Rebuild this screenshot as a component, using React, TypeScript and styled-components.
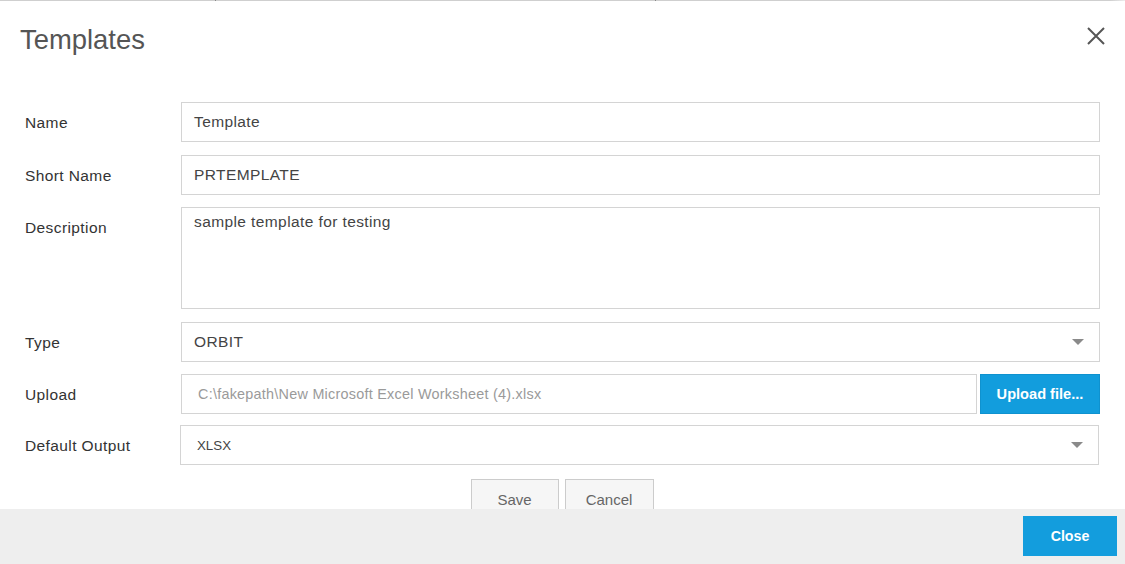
import React from "react";
import styled, { createGlobalStyle } from "styled-components";

const Global = createGlobalStyle`
  html, body { margin: 0; padding: 0; background: #fff; }
  body { font-family: "Liberation Sans", Arial, sans-serif; }
  * { box-sizing: border-box; }
`;

const Modal = styled.div`
  width: 1125px;
  height: 564px;
  display: flex;
  flex-direction: column;
  background: #fff;
  overflow: hidden;
`;

const TopRule = styled.div`
  height: 1px;
  flex: none;
  background:
    linear-gradient(#888, #888) 215px 0 / 1px 1px no-repeat,
    linear-gradient(#888, #888) 655px 0 / 1px 1px no-repeat,
    linear-gradient(to right, #cfcfcf 0, #cfcfcf 1110px, #ececec 1125px);
`;

const Header = styled.div`
  flex: none;
  display: flex;
  justify-content: space-between;
  align-items: flex-start;
  padding: 23px 20px 0 20px;
  height: 55px;
`;

const Title = styled.h1`
  margin: 0;
  font-size: 27.4px;
  line-height: 32px;
  font-weight: 400;
  color: #555;
`;

const CloseX = styled.button`
  border: none;
  background: none;
  padding: 0;
  margin-top: 3px;
  width: 18px;
  height: 18px;
  cursor: pointer;
  display: flex;
`;

const Body = styled.div`
  flex: 1;
  overflow: hidden;
  padding: 46px 25px 0 25px;
`;

const Row = styled.div<{ $mb: number; $top?: boolean }>`
  display: flex;
  align-items: ${(p) => (p.$top ? "flex-start" : "center")};
  margin-bottom: ${(p) => p.$mb}px;
`;

const Label = styled.label<{ $pt?: number }>`
  width: 156px;
  flex: none;
  font-size: 15.5px;
  letter-spacing: 0.4px;
  line-height: 18px;
  color: #333;
  padding-top: ${(p) => p.$pt ?? 0}px;
  margin-top: ${(p) => (p.$pt ? 0 : 2)}px;
`;

const Field = styled.div<{ $h?: number; $shift?: boolean }>`
  flex: 1;
  height: ${(p) => p.$h ?? 40}px;
  border: 1px solid #d4d4d4;
  background: #fff;
  padding: ${(p) => (p.$h ? "5px 12px" : "0 12px")};
  display: flex;
  align-items: ${(p) => (p.$h ? "flex-start" : "center")};
  position: relative;
  font-size: 15.5px;
  letter-spacing: 0.4px;
  color: #444;
  margin-left: ${(p) => (p.$shift ? "-1px" : "0")};
  margin-right: ${(p) => (p.$shift ? "1px" : "0")};
`;

const SmallText = styled.span<{ $muted?: boolean }>`
  font-family: Arial, "Liberation Sans", sans-serif;
  font-size: ${(p) => (p.$muted ? "14.4px" : "13.3px")};
  letter-spacing: ${(p) => (p.$muted ? "0.25px" : "0")};
  color: ${(p) => (p.$muted ? "#9a9a9a" : "#444")};
  padding-left: ${(p) => (p.$muted ? "4px" : "4px")};
`;

const Caret = styled.span`
  position: absolute;
  right: 15px;
  top: 50%;
  margin-top: -3px;
  width: 0;
  height: 0;
  border-left: 6px solid transparent;
  border-right: 6px solid transparent;
  border-top: 6px solid #8a8a8a;
`;

const UploadBtn = styled.button`
  flex: none;
  width: 120px;
  height: 40px;
  margin-left: 3px;
  border: 1px solid #0f92cf;
  background: #129ddd;
  color: #fff;
  font-family: "Liberation Sans", Arial, sans-serif;
  font-weight: 700;
  font-size: 14.6px;
  cursor: pointer;
`;

const Actions = styled.div`
  display: flex;
  justify-content: center;
  gap: 6px;
  margin-left: -25px;
  margin-right: -25px;
  padding-right: 1px;
`;

const GhostBtn = styled.button<{ $w: number }>`
  width: ${(p) => p.$w}px;
  height: 40px;
  border: 1px solid #cccccc;
  background: #f6f6f6;
  color: #666;
  font-family: "Liberation Sans", Arial, sans-serif;
  font-size: 15px;
  padding: 0;
  cursor: pointer;
`;

const Footer = styled.div`
  flex: none;
  height: 55px;
  background: #eeeeee;
  display: flex;
  justify-content: flex-end;
  align-items: flex-start;
  padding: 7px 8px 0 0;
`;

const PrimaryBtn = styled.button`
  width: 94px;
  height: 40px;
  border: none;
  background: #139ddd;
  color: #fff;
  font-family: "Liberation Sans", Arial, sans-serif;
  font-weight: 700;
  font-size: 14.2px;
  cursor: pointer;
`;

export default function App() {
  return (
    <>
      <Global />
      <Modal>
        <TopRule />
        <Header>
          <Title>Templates</Title>
          <CloseX aria-label="close">
            <svg width="18" height="18" viewBox="0 0 18 18">
              <path d="M1 1 L17 17 M17 1 L1 17" stroke="#555" strokeWidth="2" fill="none" />
            </svg>
          </CloseX>
        </Header>
        <Body>
          <Row $mb={13}>
            <Label>Name</Label>
            <Field>Template</Field>
          </Row>
          <Row $mb={12}>
            <Label>Short Name</Label>
            <Field>PRTEMPLATE</Field>
          </Row>
          <Row $mb={13} $top>
            <Label $pt={12}>Description</Label>
            <Field $h={102}>sample template for testing</Field>
          </Row>
          <Row $mb={12}>
            <Label>Type</Label>
            <Field>
              ORBIT
              <Caret />
            </Field>
          </Row>
          <Row $mb={11}>
            <Label>Upload</Label>
            <Field>
              <SmallText $muted>C:\fakepath\New Microsoft Excel Worksheet (4).xlsx</SmallText>
            </Field>
            <UploadBtn>Upload file...</UploadBtn>
          </Row>
          <Row $mb={14}>
            <Label>Default Output</Label>
            <Field $shift>
              <SmallText>XLSX</SmallText>
              <Caret />
            </Field>
          </Row>
          <Actions>
            <GhostBtn $w={88}>Save</GhostBtn>
            <GhostBtn $w={89}>Cancel</GhostBtn>
          </Actions>
        </Body>
        <Footer>
          <PrimaryBtn>Close</PrimaryBtn>
        </Footer>
      </Modal>
    </>
  );
}
